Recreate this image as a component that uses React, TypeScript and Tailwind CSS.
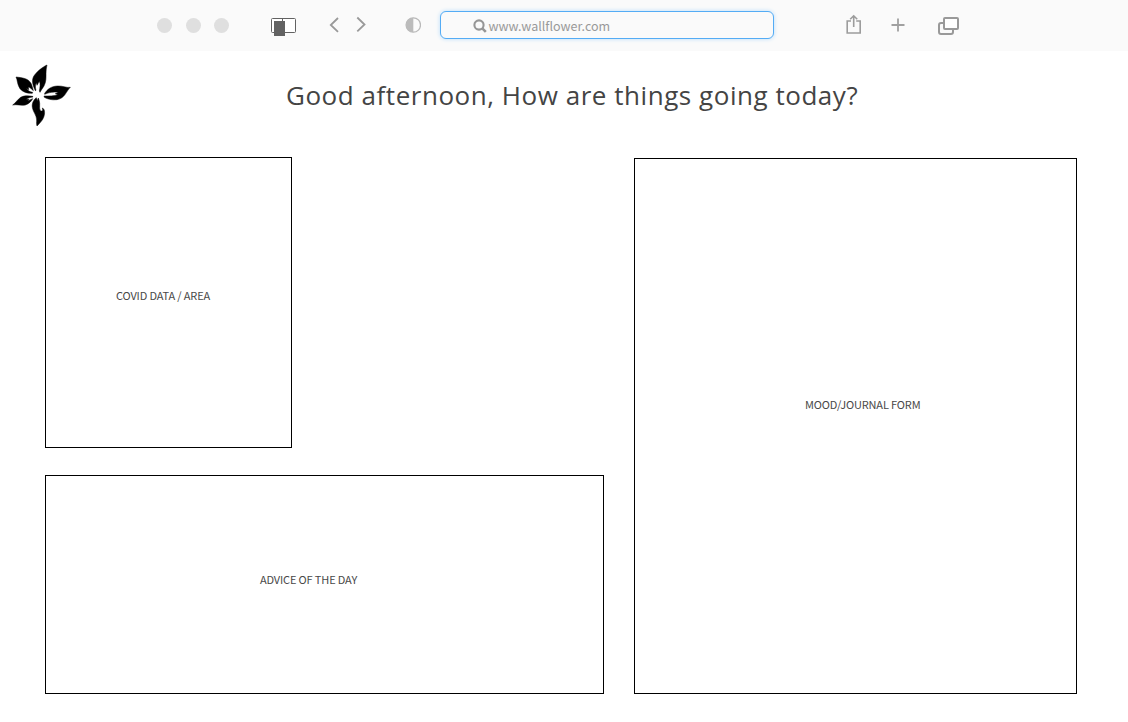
import React from "react";

const uiFont = "font-['Noto_Sans_CJK_SC','Noto_Sans',sans-serif]";

function Flower() {
  return (
    <svg className="h-20 w-[84px] shrink-0" viewBox="0 0 252 240" fill="#000" stroke="#000" strokeWidth="1.5" strokeLinejoin="round" aria-label="Wallflower">
      <path d="M141 30C129 35 107 52 100 66C96 75 97 86 102 98L106 107L108 106C105 96 106 88 109 83L111 91L118 79C122 86 120 97 118 108L120 112C123 105 128 100 132 93C139 80 138 67 138 56C138 46 139 38 141 30Z" />
      <path d="M48 66C53 76 51 87 60 101C69 112 82 115 97 115L98 112C90 111 83 107 79 100L86 104L85 96C91 98 95 102 100 107C98 100 97 94 93 85C85 70 66 68 48 66Z" />
      <path d="M38 150C47 144 52 134 62 127C73 121 85 122 98 124L99 126C91 127 83 129 78 133L87 133L83 138L98 131C94 139 87 146 76 150C63 153 51 147 38 150Z" />
      <path d="M211 97C199 99 189 92 172 93C153 94 142 103 134 115L134 118C147 112 160 110 175 112L166 116L174 119C162 123 147 123 132 123L133 127C142 132 154 136 171 134C195 130 198 109 211 97Z" />
      <path d="M109 128C101 134 95 145 97 157C99 171 110 181 110 195C110 202 109 207 111 213C119 205 127 197 131 187C136 174 134 161 127 159C129 165 128 169 124 168C118 166 119 158 119 152C120 143 117 134 115 129L112 137Z" />
    </svg>
  );
}

function BrowserBar() {
  return (
    <header className="flex h-[51px] items-start bg-[#fafafa]">
      <div className="ml-[157px] mt-[18px] flex gap-[13.5px]">
        <span className="size-[15px] rounded-full bg-[#dfdfdf]" />
        <span className="size-[15px] rounded-full bg-[#dfdfdf]" />
        <span className="size-[15px] rounded-full bg-[#dfdfdf]" />
      </div>
      <svg className="ml-[42px] mt-[17px] h-5 w-[26px]" viewBox="0 0 26 20">
        <rect x="0.5" y="1.5" width="24" height="14" rx="1" fill="#fff" stroke="#626262" />
        <path d="M11.5 1v14" stroke="#626262" />
        <path d="M3 4h11v15H3z" fill="#626262" />
      </svg>
      <svg className="ml-[32px] mt-[16px] h-[18px] w-[38px]" viewBox="0 0 38 18" fill="none" stroke="#999" strokeWidth="1.8">
        <path d="M9 2L1.8 9L9 15.8M28.3 1.5L35.5 8.5L28.3 15.3" />
      </svg>
      <svg className="ml-[38px] mt-[17px] size-4" viewBox="0 0 16 16">
        <circle cx="8.3" cy="8" r="7.2" fill="none" stroke="#b9b9b9" strokeWidth="1.3" />
        <path d="M8.3 0.7a7.3 7.3 0 0 0 0 14.6z" fill="#bbb" />
      </svg>
      <div className="ml-[19px] mt-[11px] flex h-7 w-[334px] items-center rounded-md border border-[#54acf5] bg-[#fafafa] pl-[31.5px] shadow-[0_0_4px_#b8dcfa]">
        <svg className="mt-px h-[14px] w-[14px]" viewBox="0 0 14 14" fill="none" stroke="#969696">
          <circle cx="6" cy="6" r="4.6" strokeWidth="2.1" />
          <path d="M9.3 9.3l3.5 3.5" strokeWidth="2.6" />
        </svg>
        <span className={`ml-[2px] mt-px whitespace-nowrap text-[12.5px] leading-5 tracking-[0.02px] text-[#999] ${uiFont}`}>www.wallflower.com</span>
      </div>
      <svg className="ml-[72px] mt-[14px] h-[21px] w-4" viewBox="0 0 16 21" fill="none" stroke="#9c9c9c" strokeWidth="1.6">
        <path d="M5 7H1.2v12h13V7h-4M7.7 13V2M4.2 5.3l3.5-3.5L11.2 5.3" />
      </svg>
      <svg className="ml-[29px] mt-[18px] size-[14px]" viewBox="0 0 14 14" stroke="#a0a0a0" strokeWidth="1.8">
        <path d="M7 .5v13M.5 7h13" />
      </svg>
      <svg className="ml-[33px] mt-[16px] h-5 w-[22px]" viewBox="0 0 22 20" fill="#fff" stroke="#999" strokeWidth="2">
        <rect x="1" y="7" width="14" height="11" rx="2" fill="#fafafa" />
        <rect x="6" y="2" width="14" height="11" rx="1" />
      </svg>
    </header>
  );
}

export default function App() {
  return (
    <div className="h-[722px] w-[1128px] overflow-hidden bg-white">
      <BrowserBar />
      <div className="flex h-[106px] pt-1">
        <Flower />
        <h1 className="ml-[202px] mt-[20px] h-10 whitespace-nowrap font-['Open_Sans',sans-serif] text-[26px] font-normal leading-10 tracking-[0.54px] text-[#444]">
          Good afternoon, How are things going today?
        </h1>
      </div>
      <main className={`ml-[45px] flex gap-[30px] text-[11px] leading-4 tracking-[-0.15px] text-[#484848] ${uiFont}`}>
        <div className="flex w-[559px] flex-col gap-[27px]">
          <section className="h-[291px] w-[247px] border border-black pl-[70px] pt-[129px]">
            <span className="whitespace-nowrap">COVID DATA / AREA</span>
          </section>
          <section className="h-[219px] border border-black pl-[214px] pt-[95px]">
            <span className="whitespace-nowrap">ADVICE OF THE DAY</span>
          </section>
        </div>
        <section className="mt-px h-[536px] w-[443px] border border-black pl-[170px] pt-[237px]">
          <span className="whitespace-nowrap">MOOD/JOURNAL FORM</span>
        </section>
      </main>
    </div>
  );
}
